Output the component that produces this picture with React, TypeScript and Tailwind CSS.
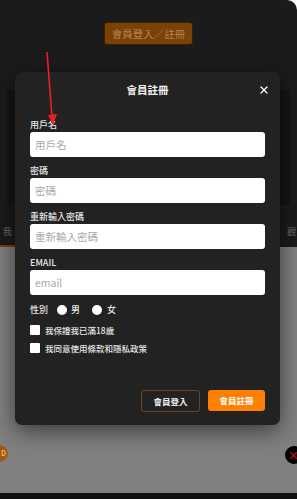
import { X } from "lucide-react";

const font = { fontFamily: '"Noto Sans CJK TC", "Noto Sans", sans-serif' };

function Field({ label, placeholder }: { label: string; placeholder: string }) {
  return (
    <div className="flex flex-col">
      <label className="text-[9px] leading-[12px] font-medium text-[#e5e5e5] mb-[1px]">{label}</label>
      <input
        placeholder={placeholder}
        className="h-[25px] w-full rounded-[3px] bg-white px-[5px] text-[10.5px] text-black placeholder:text-[#a9a9b0] outline-none"
      />
    </div>
  );
}

export default function App() {
  return (
    <div className="relative w-[297px] h-[499px] overflow-hidden bg-white" style={font}>
      {/* page behind the dialog, already dimmed */}
      <div className="flex flex-col h-full bg-[#1b1b1b] rounded-tr-[10px]">
        <div className="h-[90px] flex justify-center pt-[22px]">
          <button className="h-[23px] w-[89px] rounded-[3px] border border-[#3a1f04] bg-[#7b4106] text-[10.5px] text-[#b8814f]">
            會員登入／註冊
          </button>
        </div>
        <div className="mx-[7px] h-[115px] rounded-[3px] bg-[#141414] flex items-center pl-[7px]">
          <span className="text-[9px] text-[#444]">(</span>
        </div>
        <div className="flex-1 flex flex-col">
          <div className="h-[40px] flex items-end justify-between pl-[3px] pr-[1px] pb-[7px]">
            <span className="text-[9px] text-[#6a6a6a]">我</span>
            <span className="text-[9px] text-[#6a6a6a]">觀</span>
          </div>
          <div className="h-[2px] bg-[#7a3f05] w-[45px]" />
          <div className="flex-1 bg-[#808080]" />
          <div className="h-[6px] bg-[#111]" />
        </div>
      </div>

      {/* floating circles at page edges */}
      <div className="absolute left-[-9px] top-[445px] w-[17px] h-[17px] rounded-full bg-[#a05a12] flex items-center justify-end pr-[2px] text-[7px] font-bold text-[#e8b070]">
        D
      </div>
      <div className="absolute right-[-6px] top-[446px] w-[18px] h-[18px] rounded-full bg-black flex items-center pl-[3px]">
        <X size={11} strokeWidth={3} className="text-[#b01010]" />
      </div>

      {/* dialog */}
      <div className="absolute left-[15px] top-[72px] w-[265px] h-[353px] rounded-[7px] bg-[#222222] shadow-[0_6px_22px_rgba(0,0,0,0.55)] px-[15px] pt-[11px] flex flex-col">
        <div className="relative h-[14px] flex items-center justify-center">
          <span className="text-[10.5px] font-bold text-[#f2f2f2]">會員註冊</span>
          <X size={12} strokeWidth={2.5} className="absolute right-[-5px] top-[1px] text-white" />
        </div>
        <div className="mt-[22px] flex flex-col gap-[8px]">
          <Field label="用戶名" placeholder="用戶名" />
          <Field label="密碼" placeholder="密碼" />
          <Field label="重新輸入密碼" placeholder="重新輸入密碼" />
          <Field label="EMAIL" placeholder="email" />
        </div>
        <div className="mt-[8px] h-[14px] flex items-center text-[9px] font-medium text-[#e5e5e5]">
          <span>性別</span>
          <span className="ml-[9px] w-[10px] h-[10px] rounded-full bg-white" />
          <span className="ml-[4px]">男</span>
          <span className="ml-[12px] w-[10px] h-[10px] rounded-full bg-white" />
          <span className="ml-[5px]">女</span>
        </div>
        <div className="mt-[7px] flex flex-col gap-[6px] text-[8.5px] font-medium text-[#e5e5e5]">
          <div className="h-[12px] flex items-center">
            <span className="w-[10px] h-[10px] bg-white rounded-[1px]" />
            <span className="ml-[5px]">我保證我已滿18歲</span>
          </div>
          <div className="h-[12px] flex items-center">
            <span className="w-[10px] h-[10px] bg-white rounded-[1px]" />
            <span className="ml-[5px]">我同意使用條款和隱私政策</span>
          </div>
        </div>
        <div className="mt-auto mb-[13px] flex justify-end gap-[8px]">
          <button className="h-[22px] w-[59px] rounded-[3px] border border-[#6e4519] text-[8.5px] font-bold text-[#f0f0f0]">
            會員登入
          </button>
          <button className="h-[21px] w-[57px] rounded-[3px] bg-[#ff7f00] text-[8.5px] font-bold text-white">
            會員註冊
          </button>
        </div>
      </div>

      {/* red annotation arrow */}
      <svg className="absolute left-0 top-0 pointer-events-none" width="297" height="499">
        <line x1="47" y1="52" x2="52" y2="117" stroke="#e8211f" strokeWidth="1.6" />
        <polygon points="48,115 57,114 53,125" fill="#e8211f" />
      </svg>
    </div>
  );
}
